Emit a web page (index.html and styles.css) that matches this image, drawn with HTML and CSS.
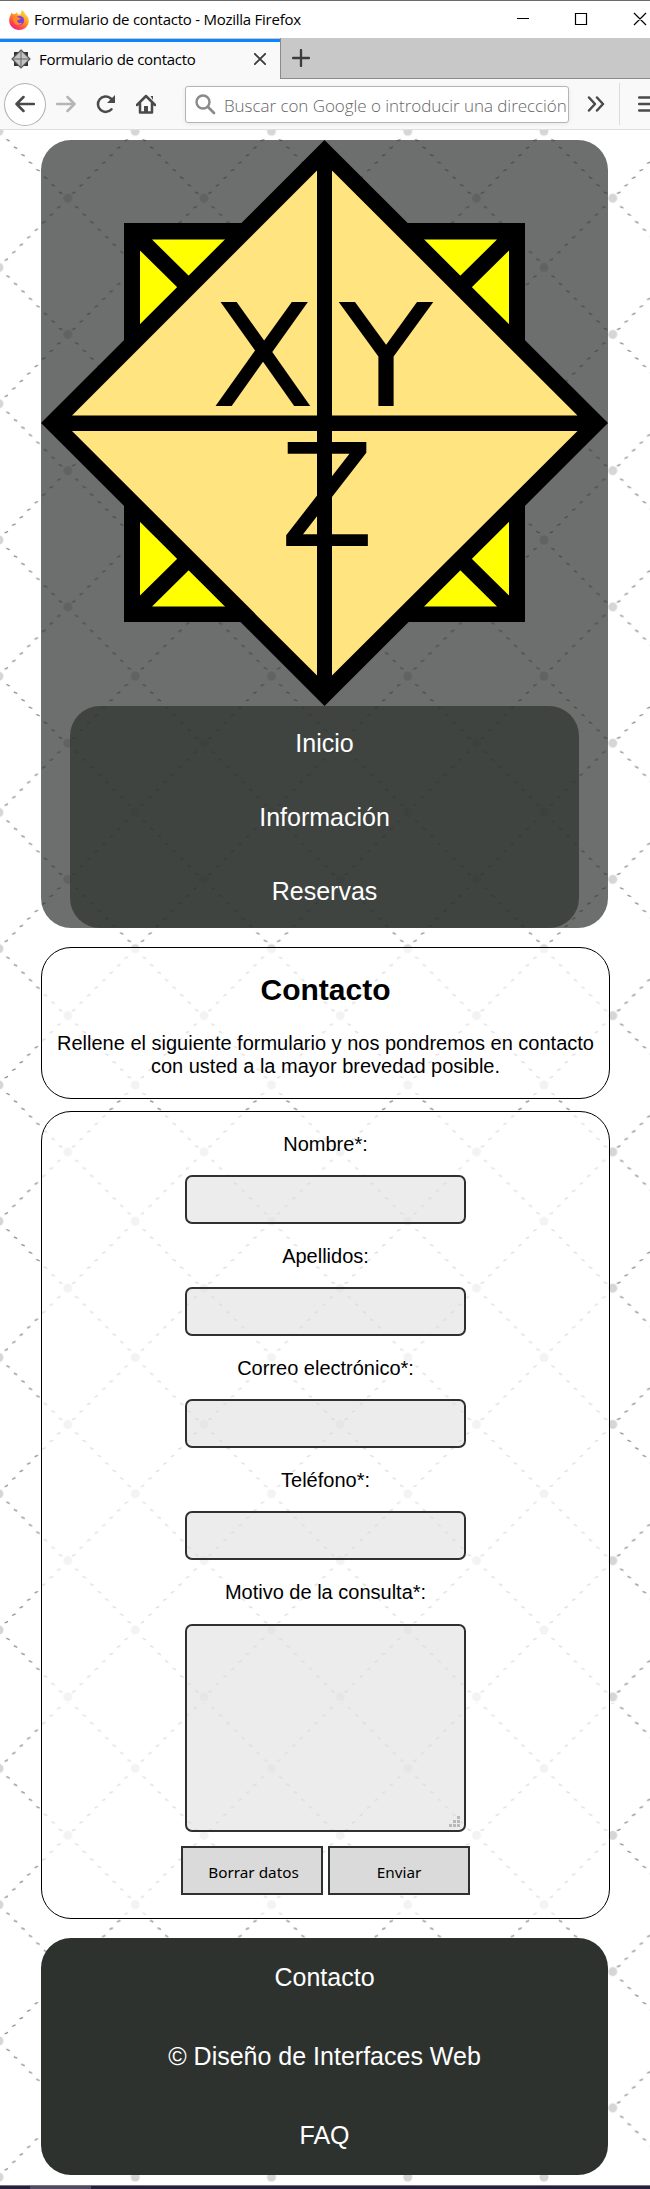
FILE: index.html
```html
<!DOCTYPE html>
<html lang="es">
<head>
<meta charset="utf-8">
<title>Formulario de contacto</title>
<link rel="stylesheet" href="styles.css">
</head>
<body>
<div class="titlebar">
  <svg class="fox" width="20" height="20" viewBox="0 0 20 20">
    <defs>
      <linearGradient id="fx" x1="0.85" y1="0.05" x2="0.2" y2="1"><stop offset="0" stop-color="#ffe14a"/><stop offset=".4" stop-color="#ff9a1f"/><stop offset=".75" stop-color="#ff4350"/><stop offset="1" stop-color="#f0148c"/></linearGradient>
    </defs>
    <path d="M13 0c2 1.500 3 3 3.500 4.500C19 6.500 20 9 19.800 11.500 19.300 16.500 15 20 10 20S.3 16 .2 10.800C.2 8 1 5.500 2 4.200L2.400 2.500 4.200 4.200 6.500 3.800 8 2.200 8.600 4.600 12 4.500C11.800 3 12 1.500 13 0Z" fill="url(#fx)"/>
    <circle cx="10.500" cy="10.500" r="4.600" fill="#7a3fe0"/>
    <path d="M4 8c1.500-2 4-2 5.500-.5L12 8.500c-1 1.500-3 1-4 2.500 1 2.500 4 2.500 5.500 1.500-1.500 3-6 3.500-8 .5C4.300 11.500 4 9.500 4 8Z" fill="#ff8a25"/>
  </svg>
  <span class="window-title">Formulario de contacto - Mozilla Firefox</span>
  <svg class="window-controls" width="140" height="37" viewBox="510 1 140 37" fill="none" stroke="#000" stroke-width="1.200">
    <path d="M517 18.500h12M575.500 13.500h11v11h-11zM634 13l12 12M646 13l-12 12"/>
  </svg>
</div>
<div class="tabs">
  <div class="tab">
    <svg width="20" height="20" viewBox="0 0 20 20">
      <path d="M3 3h14v14H3z" fill="#333"/>
      <path d="M10 1l9 9-9 9-9-9z" fill="#c4c4c4" stroke="#555" stroke-width="1.200"/>
      <path d="M10 1v18M1 10h18" stroke="#666" stroke-width="1"/>
    </svg>
    <span class="tab-title">Formulario de contacto</span>
    <svg class="tab-close" width="12" height="12" viewBox="0 0 12 12"><path d="M.8.8l10.400 10.400M11.200.8L.8 11.200" stroke="#3c3c3c" stroke-width="1.900" stroke-linecap="round"/></svg>
  </div>
  <div class="tab-rest"><svg width="18" height="18" viewBox="0 0 18 18"><path d="M9 1v16M1 9h16" stroke="#3c3c3c" stroke-width="2.300" stroke-linecap="round"/></svg></div>
</div>
<div class="toolbar">
  <div class="back"><svg width="20" height="18" viewBox="0 0 20 18"><path d="M19 9H1.500M8.500 2l-7 7 7 7" class="ico"/></svg></div>
  <svg class="forward" width="20" height="18" viewBox="0 0 20 18"><path d="M1 9h17.500M11.500 2l7 7-7 7" class="ico pale"/></svg>
  <svg class="reload" width="20" height="20" viewBox="0 0 20 20"><path d="M15.500 15.200A7.700 7.700 0 1 1 14.500 4.200L16.500 6" class="ico"/><path d="M19 1v8h-8z" fill="#4a4a4a"/></svg>
  <svg class="home" width="20" height="20" viewBox="0 0 20 20"><path d="M1 11l9-9 9 9M4 9.500V18.500h12V9.500" class="ico"/><path d="M8 18v-6h4v6z" fill="#4a4a4a"/><path d="M14.500 2h2.500v4z" fill="#4a4a4a"/></svg>
  <div class="urlbar">
    <svg width="21" height="21" viewBox="0 0 21 21"><circle cx="8" cy="8" r="6.500" fill="none" stroke="#8a8a8a" stroke-width="2.400"/><path d="M13 13l6 6" stroke="#8a8a8a" stroke-width="2.700" stroke-linecap="round"/></svg>
    <span class="url-text">Buscar con Google o introducir una dirección</span>
  </div>
  <svg class="more" width="18" height="16" viewBox="0 0 18 16"><path d="M2 1.500L8 8l-6 6.500M10 1.500L16 8l-6 6.500" class="ico"/></svg>
  <div class="menu"><svg width="12" height="18" viewBox="0 0 12 18"><path d="M1.200 2.500H12M1.200 9H12M1.200 15.500H12" class="ico"/></svg></div>
</div>

<div class="page">
  <svg class="backdrop" width="650" height="2055" viewBox="0 130 650 2055">
    <defs>
      <path id="run" d="M7.300 8.200l3.400 1.600M14.800 15.700l3.400 1.600M22.300 23.200l3.400 1.600M29.800 30.700l3.400 1.600M37.300 38.200l3.400 1.600M44.800 45.700l3.400 1.600M52.300 53.200l3.400 1.600M59.800 60.700l3.400 1.600"/>
      <pattern id="net" width="136.250" height="136.250" patternUnits="userSpaceOnUse" patternTransform="translate(-1 131.200)">
        <g fill="none" stroke="#8c8c8c" stroke-width="1.300">
          <use href="#run"/>
          <use href="#run" transform="translate(136.250 0) scale(-1 1)"/>
          <use href="#run" transform="translate(68.800 67)"/>
          <use href="#run" transform="translate(68.800 67) scale(-1 1)"/>
        </g>
        <g fill="#d6d6d6">
          <circle cx="0" cy="0" r="4.500"/><circle cx="136.250" cy="0" r="4.500"/>
          <circle cx="0" cy="136.250" r="4.500"/><circle cx="136.250" cy="136.250" r="4.500"/>
          <circle cx="68.800" cy="67" r="4.500"/>
        </g>
      </pattern>
      <pattern id="net-low" href="#net" patternTransform="translate(-1 133.400)"/>
    </defs>
    <rect y="130" width="650" height="1573" fill="url(#net)"/>
    <rect y="1703" width="650" height="482" fill="url(#net-low)"/>
  </svg>

  <header class="header">
    <svg class="logo" width="567" height="566" viewBox="41 140 567 566">
      <path d="M124 223h401v399H124z"/>
      <g fill="#ff0">
        <path d="M152 239.500h74l-37 36.500zM140 250.500v74l37.500-37zM497 239.500h-74l37 36.500zM509 250.500v74l-37.500-37z"/>
        <path d="M152 606.500h74l-37-36.500zM140 595.500v-74l37.500 37zM497 606.500h-74l37-36.500zM509 595.500v-74l-37.500 37z"/>
      </g>
      <path d="M41 423L324.500 140 608 423 324.500 706z"/>
      <path d="M72 415.500L317 170.500V415.500zM577.500 415.500L332 170.500V415.500zM72 431L317 675.500V431zM577.500 431L332 675.500V431z" fill="#ffe480"/>
      <g class="logo-letter">
        <text x="211" y="406" textLength="104" lengthAdjust="spacingAndGlyphs">X</text>
        <text x="339" y="406" textLength="94" lengthAdjust="spacingAndGlyphs">Y</text>
        <text x="280" y="546" textLength="94" lengthAdjust="spacingAndGlyphs">Z</text>
      </g>
    </svg>
    <nav class="nav">
      <a>Inicio</a>
      <a>Información</a>
      <a>Reservas</a>
    </nav>
  </header>

  <section class="card intro">
    <h1>Contacto</h1>
    <p>Rellene el siguiente formulario y nos pondremos en contacto con usted a la mayor brevedad posible.</p>
  </section>

  <form class="card form">
    <label for="nombre">Nombre*:</label>
    <input id="nombre" type="text">
    <label for="apellidos">Apellidos:</label>
    <input id="apellidos" type="text">
    <label for="correo">Correo electrónico*:</label>
    <input id="correo" type="text">
    <label for="telefono">Teléfono*:</label>
    <input id="telefono" type="text">
    <label for="motivo">Motivo de la consulta*:</label>
    <div class="area">
      <textarea id="motivo"></textarea>
      <svg class="grip" width="12" height="12" viewBox="0 0 12 12" fill="#b9b9b9"><path d="M8 0h3v3H8zM4 4h3v3H4zM8 4h3v3H8zM0 8h3v3H0zM4 8h3v3H4zM8 8h3v3H8z"/></svg>
    </div>
    <div class="buttons">
      <button class="reset" type="reset">Borrar datos</button>
      <button type="button">Enviar</button>
    </div>
  </form>

  <footer class="footer">
    <a>Contacto</a>
    <span>© Diseño de Interfaces Web</span>
    <a>FAQ</a>
  </footer>
</div>
<div class="taskbar"><div class="taskbar-item"></div></div>
</body>
</html>
```
FILE: styles.css
```css
* { box-sizing: border-box; }
body {
  margin: 0;
  width: 650px;
  background: #fff;
  color: #000;
  font-family: "Liberation Sans", Arial, sans-serif;
  font-size: 20px;
  line-height: 23px;
}
svg { display: block; flex: none; }

/* browser window */
.titlebar, .tabs, .toolbar {
  display: flex;
  align-items: center;
  font-family: "Open Sans", "Noto Sans", sans-serif;
  font-size: 15px;
  white-space: nowrap;
}
.titlebar {
  height: 38px;
  border-top: 1px solid #6b6b6b;
  padding-left: 9px;
}
.window-title { margin-left: 5px; letter-spacing: -0.25px; }
.window-controls { margin-left: auto; }
.tabs { height: 41px; align-items: stretch; background: #f9f9fa; }
.tab {
  width: 280px;
  display: flex;
  align-items: center;
  padding-left: 11px;
  border-top: 1px solid #c8c8c8;
  box-shadow: inset 0 3px #0a84ff;
}
.tab-title { margin-left: 8px; letter-spacing: -0.3px; }
.tab-close { margin: 0 14px 0 auto; }
.tab-rest {
  flex: 1;
  padding: 11px 0 0 11px;
  background: #c8c8c8;
  border-left: 1px solid #8b8b8b;
  border-bottom: 1px solid #8b8b8b;
}
.toolbar {
  height: 51px;
  padding-left: 4px;
  background: #f9f9fa;
  border-bottom: 1px solid #dedede;
}
.ico {
  fill: none;
  stroke: #4a4a4a;
  stroke-width: 2.5;
  stroke-linecap: round;
  stroke-linejoin: round;
}
.ico.pale { stroke: #b5b5b5; }
.back {
  width: 42px;
  height: 43px;
  display: flex;
  align-items: center;
  justify-content: center;
  border: 1px solid #b1b1b3;
  border-radius: 50%;
  background: #fff;
}
.forward { margin-left: 10px; }
.reload { margin-left: 20px; }
.home { margin-left: 20px; }
.urlbar {
  width: 384px;
  height: 37px;
  margin-left: 29px;
  padding-left: 9px;
  display: flex;
  align-items: center;
  overflow: hidden;
  background: #fff;
  border: 1px solid #b5b5b5;
  border-radius: 3px;
  box-shadow: 0 1px 4px rgba(0, 0, 0, .08);
}
.url-text {
  margin-left: 8px;
  padding-top: 3px;
  color: #666;
  font-size: 17px;
  font-weight: 300;
  letter-spacing: -0.05px;
}
.more { margin-left: 18px; }
.menu {
  height: 42px;
  margin-left: 14px;
  padding-left: 18px;
  display: flex;
  align-items: center;
  border-left: 1px solid #dcdcdc;
}

/* page */
.page {
  position: relative;
  height: 2055px;
  padding: 10px 0 0 41px;
  overflow: hidden;
}
.backdrop { position: absolute; left: 0; top: 0; }
.header, .card, .footer { position: relative; border-radius: 30px; }
.header {
  width: 567px;
  background: rgba(46, 50, 47, .7);
}
.logo-letter { font: 143px "DejaVu Sans", sans-serif; }
.nav {
  margin: 0 29px;
  border-radius: 30px;
  background: rgba(46, 50, 47, .7);
}
.nav a {
  display: flex;
  height: 74px;
  align-items: center;
  justify-content: center;
  color: #fff;
  font-size: 25px;
}
.card {
  width: 569px;
  border: 1px solid #000;
  background: rgba(255, 255, 255, .7);
  text-align: center;
}
.intro { height: 152px; margin-top: 19px; padding: 25px 10px 0; }
.intro h1 { margin: 0; font-size: 30px; line-height: 34px; }
.intro p { margin: 25px 0 0; }
.form {
  height: 808px;
  margin-top: 12px;
  padding: 21px 0 0;
  display: flex;
  flex-direction: column;
  align-items: center;
}
.form label { height: 23px; margin-bottom: 19px; }
.form label[for="motivo"] { margin-bottom: 20px; }
.form input, .form textarea {
  display: block;
  width: 281px;
  height: 49px;
  margin: 0 0 21px;
  border: 2px solid #2e322f;
  border-radius: 7px;
  background: rgba(218, 218, 218, .5);
  outline: 0;
}
.form textarea { height: 208px; margin: 0; resize: none; }
.area { position: relative; }
.grip { position: absolute; right: 5px; bottom: 4px; }
.buttons { display: flex; gap: 5px; margin-top: 14px; }
.buttons button {
  width: 142px;
  height: 49px;
  padding: 3px 0 0;
  border: 2px solid #2e322f;
  background: #dadada;
  color: #000;
  font: 15.3px "Noto Sans", sans-serif;
}
.buttons .reset { padding-left: 3px; }
.footer {
  width: 567px;
  height: 237px;
  margin-top: 19px;
  display: flex;
  flex-direction: column;
  background: #2e322f;
  color: #fff;
  font-size: 25px;
}
.footer > * {
  flex: 1;
  display: flex;
  align-items: center;
  justify-content: center;
}
.taskbar { height: 4px; padding-left: 30px; background: #271f41; border-top: 1px solid #777; }
.taskbar-item { width: 61px; height: 3px; background: #514a66; }
```
